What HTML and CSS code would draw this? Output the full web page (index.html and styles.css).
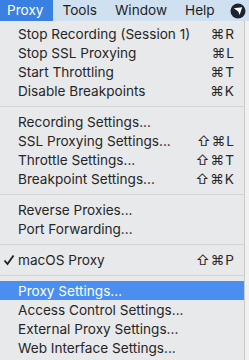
FILE: index.html
```html
<!DOCTYPE html>
<html>

<head>
    <link rel="stylesheet" href="styles.css">
</head>

<body>
    <div class="menubar">
        <span class="menu-title active">Proxy</span>
        <span class="menu-title">Tools</span>
        <span class="menu-title">Window</span>
        <span class="menu-title">Help</span>
        <span class="menu-icon">
            <svg width="16" height="16" viewBox="0 0 16 16">
                <circle cx="8" cy="8" r="7.5" fill="#1b2430" />
                <path d="M3.8 5.2 L12.2 4.2 L9.6 12 L8.2 8.4 Z" fill="#ffffff" />
            </svg>
        </span>
    </div>
    <div class="desktop">
        <div class="dropdown">
            <div class="item"><span class="check"></span><span class="label">Stop Recording (Session 1)</span><span class="key">⌘R</span></div>
            <div class="item"><span class="check"></span><span class="label">Stop SSL Proxying</span><span class="key">⌘L</span></div>
            <div class="item"><span class="check"></span><span class="label">Start Throttling</span><span class="key">⌘T</span></div>
            <div class="item"><span class="check"></span><span class="label">Disable Breakpoints</span><span class="key">⌘K</span></div>
            <div class="sep"></div>
            <div class="item"><span class="check"></span><span class="label">Recording Settings...</span><span class="key"></span></div>
            <div class="item"><span class="check"></span><span class="label">SSL Proxying Settings...</span><span class="key">⇧⌘L</span></div>
            <div class="item"><span class="check"></span><span class="label">Throttle Settings...</span><span class="key">⇧⌘T</span></div>
            <div class="item"><span class="check"></span><span class="label">Breakpoint Settings...</span><span class="key">⇧⌘K</span></div>
            <div class="sep"></div>
            <div class="item"><span class="check"></span><span class="label">Reverse Proxies...</span><span class="key"></span></div>
            <div class="item"><span class="check"></span><span class="label">Port Forwarding...</span><span class="key"></span></div>
            <div class="sep"></div>
            <div class="item">
                <span class="check">
                    <svg width="12" height="12" viewBox="0 0 12 12">
                        <path d="M1.5 6.5 L4.5 10 L10.5 1.5" fill="none" stroke="#1e1e1e" stroke-width="1.8" />
                    </svg>
                </span>
                <span class="label">macOS Proxy</span><span class="key">⇧⌘P</span>
            </div>
            <div class="sep"></div>
            <div class="item selected"><span class="check"></span><span class="label">Proxy Settings...</span><span class="key"></span></div>
            <div class="item"><span class="check"></span><span class="label">Access Control Settings...</span><span class="key"></span></div>
            <div class="item"><span class="check"></span><span class="label">External Proxy Settings...</span><span class="key"></span></div>
            <div class="item"><span class="check"></span><span class="label">Web Interface Settings...</span><span class="key"></span></div>
        </div>
        <div class="window-edge"></div>
    </div>
</body>

</html>
```

FILE: styles.css
```css
body {
    font-family: Inter, "Noto Sans", sans-serif;
    margin: 0;
    width: 249px;
    height: 360px;
    overflow: hidden;
    background-color: #e9eaec;
}

.menubar {
    height: 21px;
    display: flex;
    align-items: center;
    background-color: #cfe0f1;
    font-size: 13.6px;
    color: #1e1e1e;
}

.menu-title {
    height: 21px;
    line-height: 21px;
    padding: 0 9px 0 9px;
}

.menu-title.active {
    background-color: #3a80e2;
    color: white;
    padding: 0 10px 0 7px;
}

.menu-icon {
    margin-left: auto;
    margin-right: 3px;
    display: flex;
}

.desktop {
    display: flex;
    height: 339px;
}

.dropdown {
    width: 244px;
    padding-top: 3px;
    background-color: #e8e9eb;
    font-size: 13.6px;
    color: #262626;
    border-right: 1px solid #c9c9c9;
}

.window-edge {
    flex: 1;
    background-color: #f1f1f1;
}

.item {
    height: 19px;
    display: flex;
    align-items: center;
}

.item.selected {
    background-color: #4a8ff0;
    color: white;
}

.check {
    width: 18px;
    padding-left: 3px;
    box-sizing: border-box;
    display: flex;
}

.label {
    flex: 1;
}

.key {
    padding-right: 9px;
    letter-spacing: 1px;
}

.sep {
    height: 12px;
    display: flex;
    align-items: center;
}

.sep::after {
    content: "";
    flex: 1;
    height: 1px;
    background-color: #d2d3d5;
}
```
